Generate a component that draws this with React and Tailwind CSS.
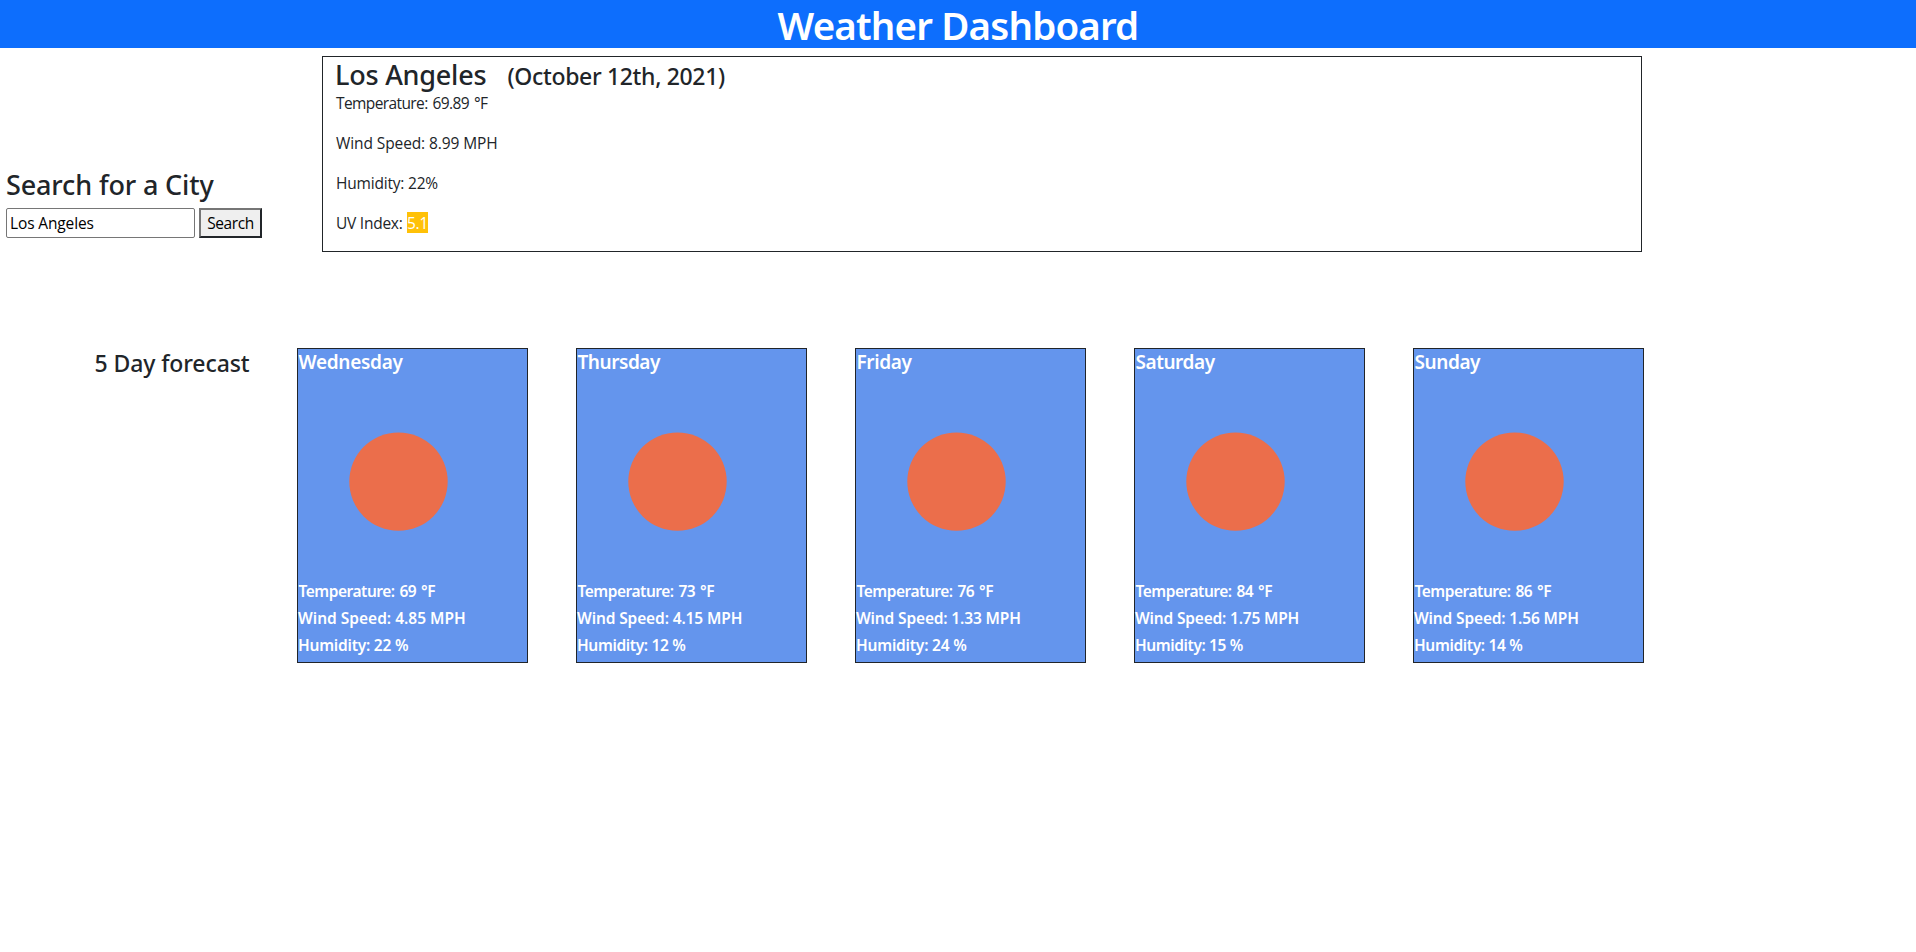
const current = [
  { text: 'Temperature: 69.89 °F', tracking: 'tracking-[-0.6px] [word-spacing:1.5px]' },
  { text: 'Wind Speed: 8.99 MPH', tracking: 'tracking-[-0.1px]' },
  { text: 'Humidity: 22%', tracking: 'tracking-[-0.2px]' },
]

const forecast = [
  { day: 'Wednesday', dayTracking: 'tracking-[-0.29px]', temp: 69, wind: '4.85', windTracking: 'tracking-[0px]', humidity: 22, humidityTracking: 'tracking-[-0.22px]' },
  { day: 'Thursday', dayTracking: 'tracking-[-0.45px]', temp: 73, wind: '4.15', windTracking: 'tracking-[-0.12px]', humidity: 12, humidityTracking: 'tracking-[-0.36px]' },
  { day: 'Friday', dayTracking: 'tracking-[-0.36px]', temp: 76, wind: '1.33', windTracking: 'tracking-[-0.15px]', humidity: 24, humidityTracking: 'tracking-[-0.2px]' },
  { day: 'Saturday', dayTracking: 'tracking-[-0.45px]', temp: 84, wind: '1.75', windTracking: 'tracking-[-0.18px]', humidity: 15, humidityTracking: 'tracking-[-0.4px]' },
  { day: 'Sunday', dayTracking: 'tracking-[-0.42px]', temp: 86, wind: '1.56', windTracking: 'tracking-[-0.15px]', humidity: 14, humidityTracking: 'tracking-[-0.36px]' },
]

function SunIcon() {
  return (
    <svg className="block h-[200px] w-[200px]" viewBox="0 0 200 200" aria-hidden="true">
      <circle cx="100.5" cy="100.6" r="49.2" fill="#eb6e4b" />
    </svg>
  )
}

function ForecastCard({ item }) {
  return (
    <article className="h-[315px] w-[231px] border border-[#212529] bg-[#6495ed] font-['Noto_Sans',sans-serif] text-[15.5px] font-semibold whitespace-nowrap text-white">
      <h5 className={`mb-2 h-6 pl-[0.5px] text-[19px] leading-[27px] ${item.dayTracking}`}>{item.day}</h5>
      <SunIcon />
      <p className="mb-[7px] h-5 pl-[0.5px] leading-5 tracking-[-0.48px] [word-spacing:1.3px]">Temperature: {item.temp} °F</p>
      <p className={`mb-[7px] h-5 leading-5 ${item.windTracking}`}>Wind Speed: {item.wind} MPH</p>
      <p className={`h-5 leading-5 ${item.humidityTracking}`}>Humidity: {item.humidity} %</p>
    </article>
  )
}

export default function App() {
  return (
    <div className="min-h-screen bg-white font-['Open_Sans',sans-serif] text-[15.5px] text-[#212529]">
      <header className="h-12 bg-[#0d6efd] text-center font-['Noto_Sans',sans-serif] text-[38.5px] leading-[50px] font-semibold tracking-[-0.84px] text-white">
        <h1>Weather Dashboard</h1>
      </header>

      <main>
        <div className="flex">
          <section className="w-[322px] pt-[119px] pl-1.5">
            <h3 className="mb-2 h-[33px] font-['Noto_Sans',sans-serif] text-[27px] leading-9 font-medium tracking-[-0.14px]">
              Search for a City
            </h3>
            <form className="flex gap-1" onSubmit={(e) => e.preventDefault()}>
              <input
                defaultValue="Los Angeles"
                aria-label="City"
                className="h-[30px] w-[189px] rounded-[2px] border border-[#767676] bg-white px-[3px] tracking-[-0.14px] text-black outline-none"
              />
              <button className="h-[30px] w-[63px] border-2 border-t-[#767676] border-r-[#212529] border-b-[#212529] border-l-[#767676] bg-[#efefef] leading-6 tracking-[-0.4px] text-black">
                Search
              </button>
            </form>
          </section>

          <section className="mt-2 h-[196px] w-[1320px] border border-[#212529] pl-[13px] leading-6">
            <div className="-ml-px flex h-[34px] font-['Noto_Sans',sans-serif] font-medium">
              <h3 className="w-[172.5px] text-[27px] leading-[35px] tracking-[-0.23px]">Los Angeles</h3>
              <h4 className="text-[23px] leading-[38px] tracking-[-0.34px]">(October 12th, 2021)</h4>
            </div>
            {current.map((line) => (
              <p key={line.text} className={`mb-4 ${line.tracking}`}>{line.text}</p>
            ))}
            <p className="flex items-start tracking-[-0.25px]">
              <span className="w-[71px]">UV Index:</span>
              <span className="mt-px h-[21px] w-[21px] bg-[#ffc107] leading-[22px] text-white">5.1</span>
            </p>
          </section>
        </div>

        <div className="flex pt-24">
          <h4 className="w-[297px] pt-px pl-[94.5px] font-['Noto_Sans',sans-serif] text-[23px] leading-7 font-medium tracking-[-0.1px]">
            5 Day forecast
          </h4>
          <div className="flex gap-12">
            {forecast.map((item) => (
              <ForecastCard key={item.day} item={item} />
            ))}
          </div>
        </div>
      </main>
    </div>
  )
}
